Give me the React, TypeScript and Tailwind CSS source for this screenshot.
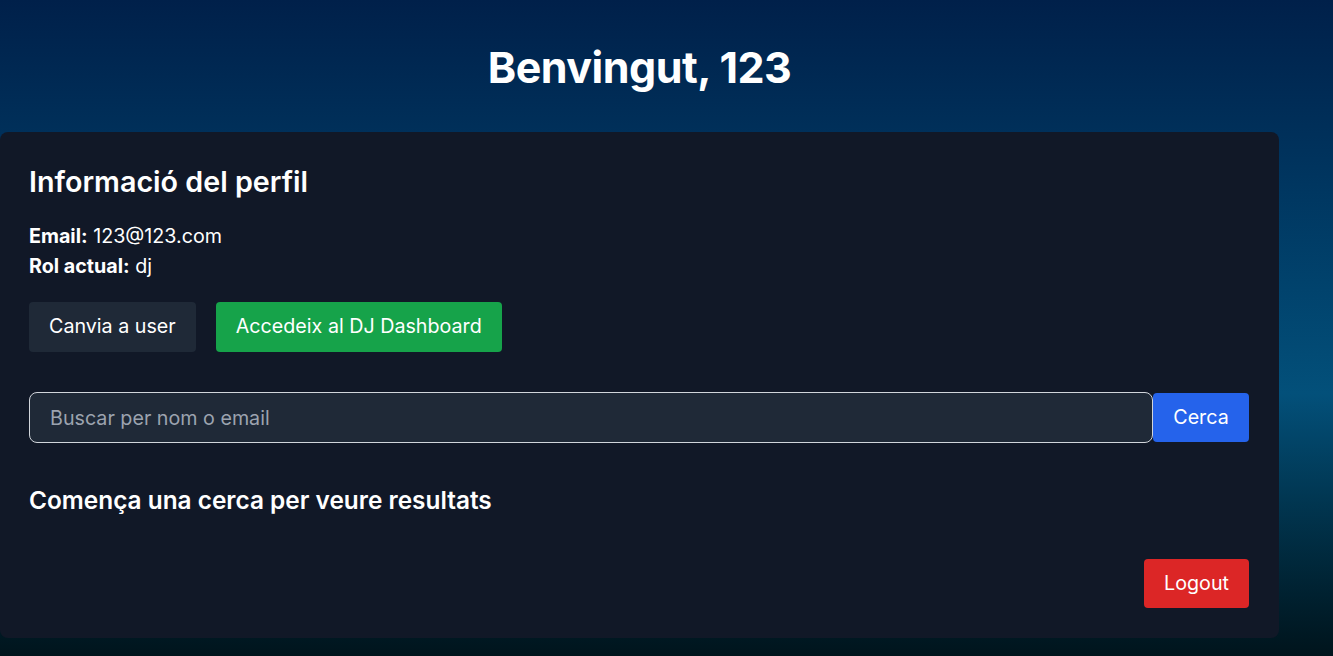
export default function App() {
  return (
    <div
      className="min-h-screen w-full bg-gradient-to-b from-[#00204a] via-[#03507a] via-60% to-[#00141c] text-white"
      style={{ fontFamily: "Inter, 'Noto Sans', sans-serif" }}
    >
      <div className="w-[1279px]">
        <h1 className="pt-[41px] pb-[39px] text-center text-[43px] font-bold leading-[52px] tracking-[-0.5px]">
          Benvingut, 123
        </h1>

        <div className="rounded-lg bg-[#111827] pl-[29px] pr-[30px] pt-8 pb-[30px]">
          <h2 className="text-[28.7px] font-semibold leading-[36px]">Informació del perfil</h2>

          <div className="mt-[21px] text-[19.7px] leading-[30px]">
            <p>
              <span className="font-bold">Email:</span> 123@123.com
            </p>
            <p>
              <span className="font-bold">Rol actual:</span> dj
            </p>
          </div>

          <div className="mt-[21px] flex gap-5">
            <button className="h-[50px] rounded bg-[#1f2937] px-5 text-[19.7px]">Canvia a user</button>
            <button className="h-[50px] rounded bg-[#16a34a] px-5 text-[19.7px]">Accedeix al DJ Dashboard</button>
          </div>

          <div className="mt-10 flex items-center">
            <input
              className="h-[51px] flex-1 rounded-lg border border-[#d1d5db] bg-[#1f2937] px-5 text-[19.7px] text-white placeholder:text-[#9ca3af] outline-none"
              placeholder="Buscar per nom o email"
            />
            <button className="h-[49px] w-[96px] rounded bg-[#2563eb] text-[19.7px]">Cerca</button>
          </div>

          <h3 className="mt-[41px] text-[24.4px] font-semibold leading-8">
            Comença una cerca per veure resultats
          </h3>

          <div className="mt-[43px] flex justify-end">
            <button className="h-[49px] rounded bg-[#dc2626] px-5 text-[19.7px]">Logout</button>
          </div>
        </div>
      </div>
    </div>
  );
}
